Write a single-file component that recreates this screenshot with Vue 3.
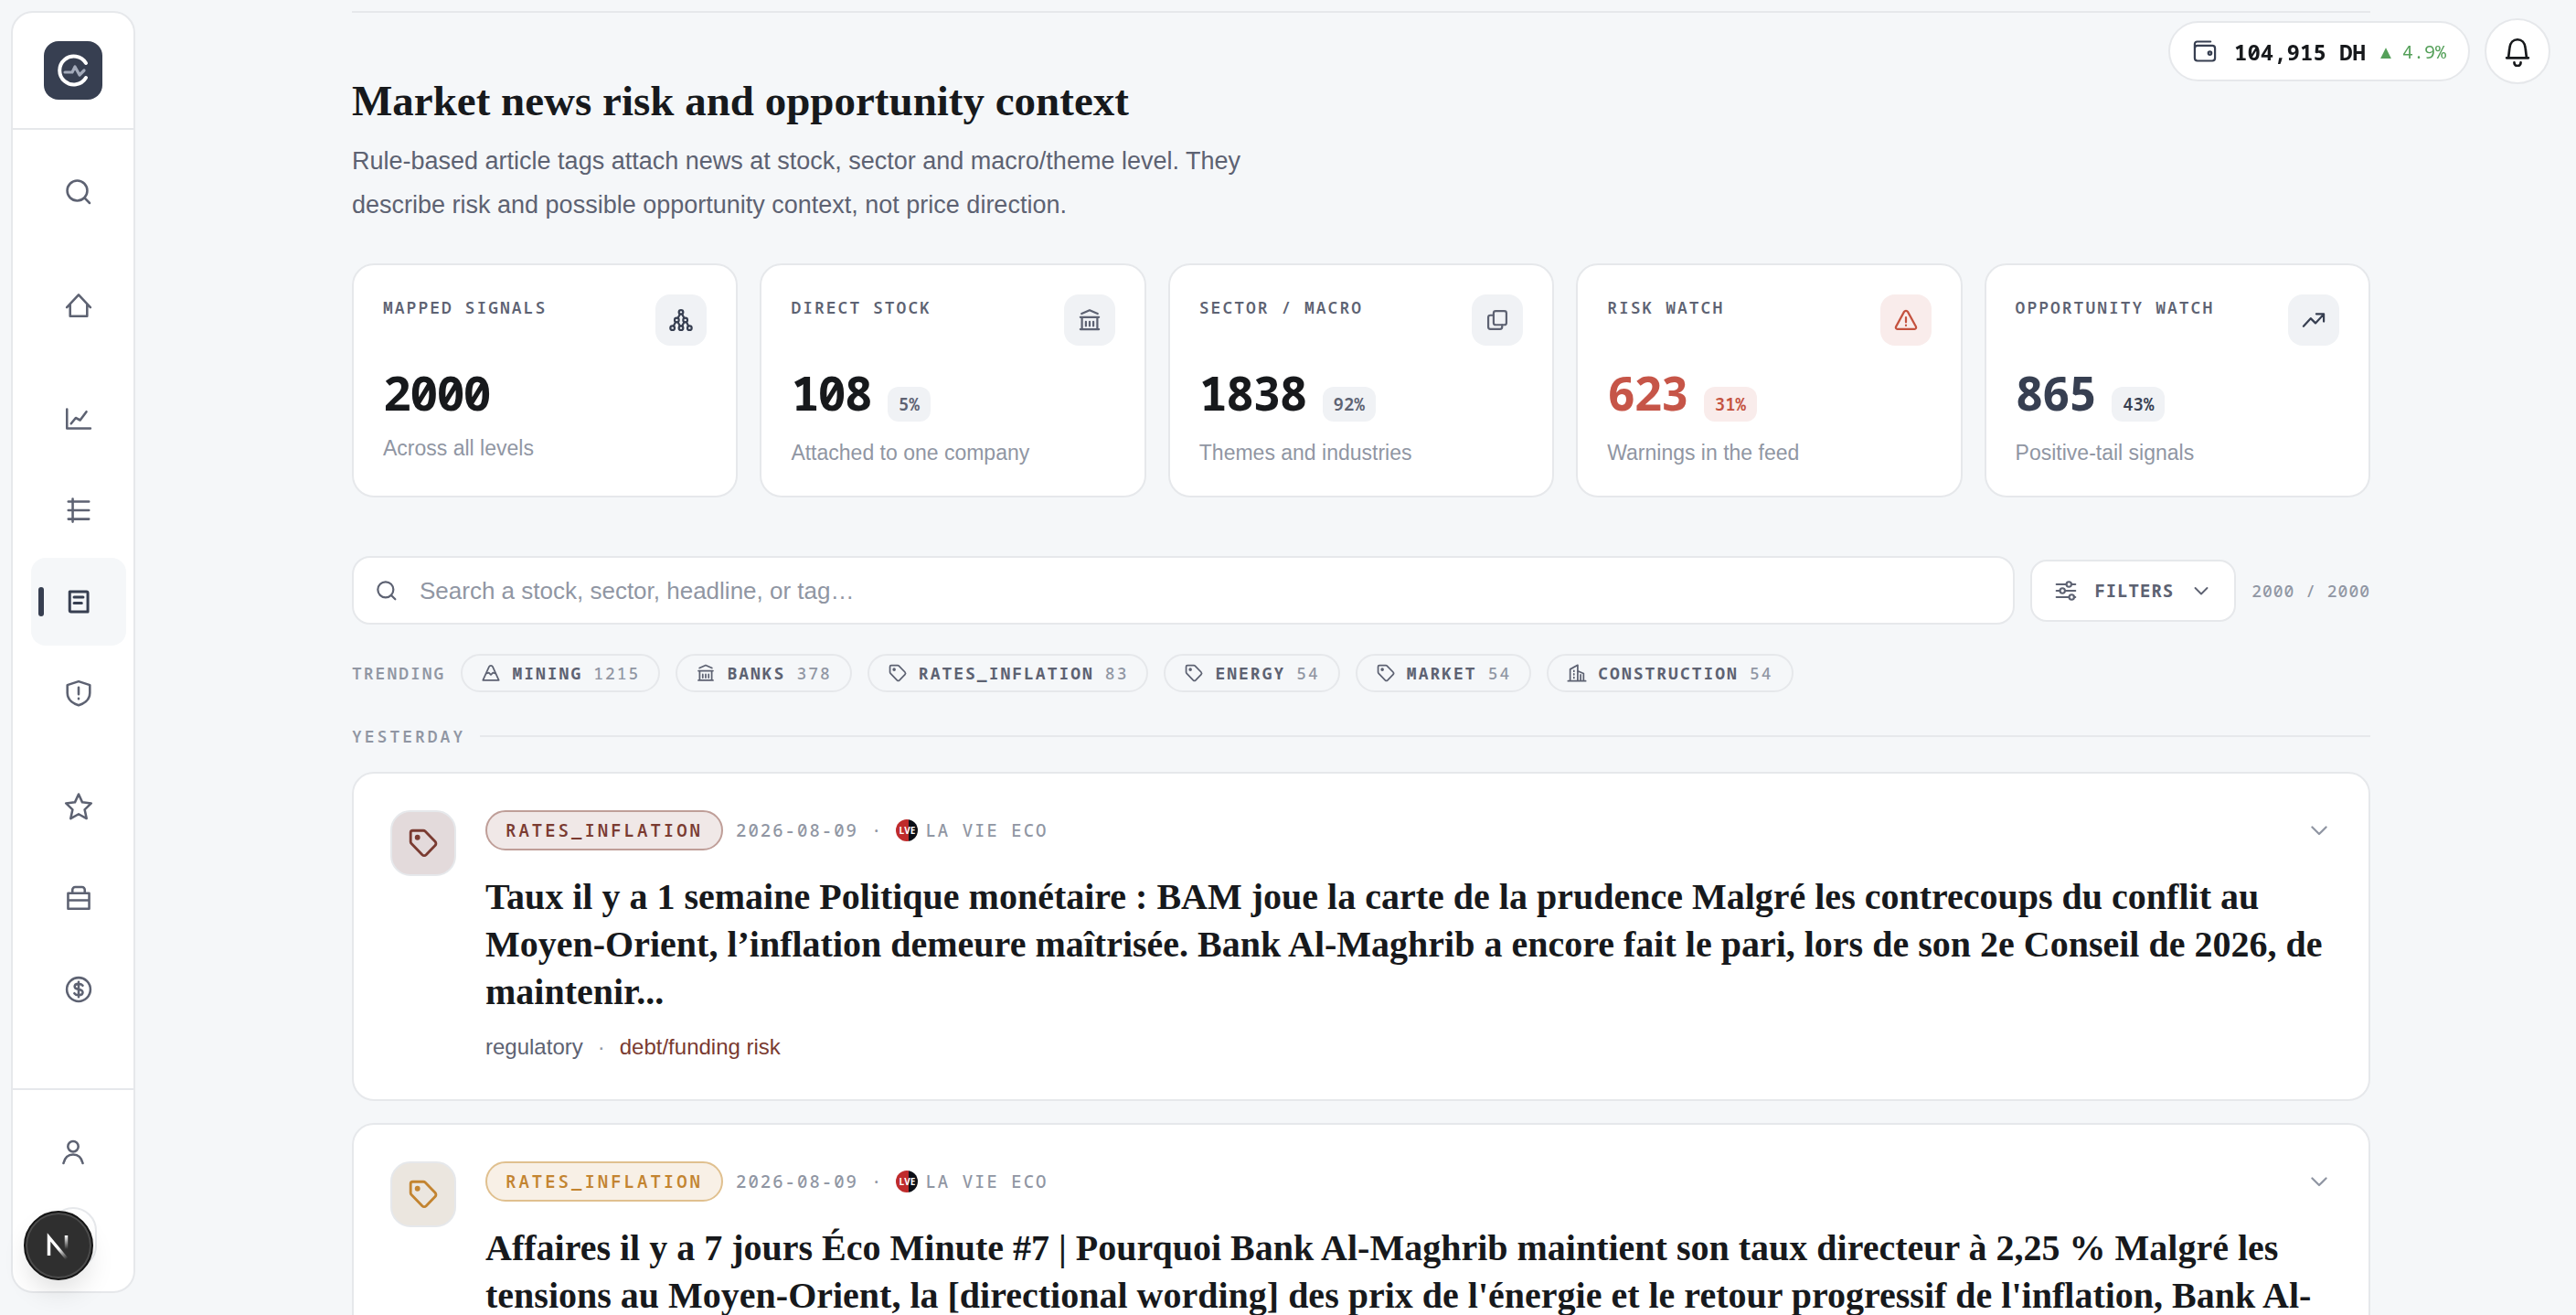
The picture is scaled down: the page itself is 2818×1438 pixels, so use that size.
<template>
  <div class="shell">
    <aside class="sidebar">
      <div class="brand">
        <a class="brand-mark" href="#" aria-label="Home page">
          <svg viewBox="0 0 64 64" fill="none" stroke-linecap="round" stroke-linejoin="round">
            <path d="M46 24 A15.5 15.5 0 1 0 46 40" stroke="#fff" stroke-width="4" />
            <path d="M23 34h8l3-6 5 9 5-5" stroke="#a3aaba" stroke-width="3.2" />
          </svg>
        </a>
      </div>
      <nav class="nav">
        <div v-for="(group, i) in navGroups" :key="i" class="nav-group">
          <a
            v-for="item in group"
            :key="item.name"
            href="#"
            class="nav-item"
            :class="{ active: item.name === 'News' }"
            :aria-label="item.name"
          >
            <svg class="icon" viewBox="0 0 24 24" v-html="icons[item.icon]"></svg>
          </a>
        </div>
      </nav>
      <div class="account">
        <a href="#" class="account-link" aria-label="Account">
          <svg class="icon" viewBox="0 0 24 24" v-html="icons.user"></svg>
        </a>
        <button class="collapse" aria-label="Collapse"></button>
      </div>
    </aside>

    <main class="main">
      <div class="content">
        <header class="intro">
          <h1>Market news risk and opportunity context</h1>
          <p>
            Rule-based article tags attach news at stock, sector and macro/theme level. They describe
            risk and possible opportunity context, not price direction.
          </p>
        </header>

        <section class="stats">
          <article v-for="stat in stats" :key="stat.label" class="stat" :class="stat.tone">
            <div class="stat-head">
              <span class="stat-label">{{ stat.label }}</span>
              <span class="stat-icon">
                <svg class="icon" viewBox="0 0 24 24" v-html="icons[stat.icon]"></svg>
              </span>
            </div>
            <div class="stat-row">
              <strong>{{ stat.value }}</strong>
              <span v-if="stat.share" class="share">{{ stat.share }}</span>
            </div>
            <p>{{ stat.note }}</p>
          </article>
        </section>

        <div class="toolbar">
          <label class="search">
            <svg class="icon" viewBox="0 0 24 24" v-html="icons.search"></svg>
            <input
              v-model="query"
              type="text"
              aria-label="Search news"
              placeholder="Search a stock, sector, headline, or tag…"
            />
          </label>
          <button class="filters">
            <svg class="icon" viewBox="0 0 24 24" v-html="icons.sliders"></svg>
            <span>FILTERS</span>
            <svg class="icon chevron" viewBox="0 0 24 24" v-html="icons.chevron"></svg>
          </button>
          <span class="count">2000 / 2000</span>
        </div>

        <div class="trending">
          <span class="trending-label">TRENDING</span>
          <button v-for="topic in topics" :key="topic.name" class="chip">
            <svg class="icon" viewBox="0 0 24 24" v-html="icons[topic.icon]"></svg>
            <span>{{ topic.name }}</span>
            <span class="chip-count">{{ topic.count }}</span>
          </button>
        </div>

        <h2 class="day">YESTERDAY</h2>

        <section class="feed">
          <article v-for="item in articles" :key="item.title" class="story" :class="item.tone">
            <span class="story-icon">
              <svg class="icon" viewBox="0 0 24 24" v-html="icons.tag"></svg>
            </span>
            <div class="story-body">
              <div class="meta">
                <span class="pill">RATES_INFLATION</span>
                <span>{{ item.date }}</span>
                <span>·</span>
                <span class="source"><span class="source-logo">LVE</span>LA VIE ECO</span>
                <button class="expand" aria-label="Expand">
                  <svg class="icon" viewBox="0 0 24 24" v-html="icons.chevron"></svg>
                </button>
              </div>
              <h3>{{ item.title }}</h3>
              <div class="tags">
                <span>regulatory</span>
                <span class="dot">·</span>
                <span class="risk">debt/funding risk</span>
              </div>
            </div>
          </article>
        </section>
      </div>
    </main>

    <div class="topbar">
      <button class="wallet">
        <svg class="icon" viewBox="0 0 24 24" v-html="icons.wallet"></svg>
        <span class="balance">
          <strong>104,915 DH</strong>
          <span class="change">▲ 4.9%</span>
        </span>
      </button>
      <button class="bell" aria-label="Notifications">
        <svg class="icon" viewBox="0 0 24 24" v-html="icons.bell"></svg>
      </button>
    </div>

    <button class="dev-badge" aria-label="Open dev tools">
      <svg viewBox="0 0 40 40" fill="none">
        <defs>
          <linearGradient id="diag" x1="22" y1="22" x2="31" y2="33" gradientUnits="userSpaceOnUse">
            <stop stop-color="#fff" />
            <stop offset="1" stop-color="#fff" stop-opacity="0" />
          </linearGradient>
          <linearGradient id="stem" x1="0" y1="9" x2="0" y2="24" gradientUnits="userSpaceOnUse">
            <stop stop-color="#fff" />
            <stop offset="1" stop-color="#fff" stop-opacity="0" />
          </linearGradient>
        </defs>
        <path d="M9.5 31V11L29.5 35" stroke="url(#diag)" stroke-width="3.5" />
        <path d="M28.5 9v16" stroke="url(#stem)" stroke-width="3.5" />
      </svg>
    </button>
  </div>
</template>

<script setup>
import { ref } from 'vue';

const query = ref('');

// 24x24 stroke icons
const icons = {
  search: '<circle cx="11" cy="11" r="7.3"/><path d="M16.3 16.3L20 20"/>',
  home: '<path d="M3.4 13.4L12 4.3l8.600 9.100M5.800 11.500V19.800h12.400v-8.300"/>',
  chart: '<path d="M3.500 5v14H20.600M6.500 15.500l3.400-4.200 3.200 1.700 4.600-6.200"/>',
  list: '<path d="M4.500 5.600h15M4.500 12h15M4.500 18.400h15M7.700 3.600v16.800"/>',
  news: '<path d="M5.500 18.500V4.700h12.200a1 1 0 0 1 1 1v13.600H6.500a1 1 0 0 1-1-1zM8.700 8.600h6.600M8.700 13h5.500"/>',
  shield: '<path d="M12 3.400l8.200 2.700v5.700c0 4.600-3.700 7.600-8.200 9-4.500-1.400-8.200-4.400-8.200-9V6.100zM12 7.800v5M12 15.900v.2"/>',
  star: '<path d="M12 3l2.700 5.900 6.500.7-4.800 4.600 1.400 6.500L12 17.500l-5.800 3.200 1.400-6.500-4.800-4.600 6.500-.7z"/>',
  briefcase: '<path d="M4.300 8.500h15.400v11.300H4.300zM4.300 13.700h15.400M7.500 8.200V6a2 2 0 0 1 2-2h5a2 2 0 0 1 2 2v2.200"/>',
  dollar: '<circle cx="12" cy="12" r="8.600"/><path d="M15 9.200c-.6-.9-1.700-1.300-3-1.300-1.700 0-2.900.7-2.900 2s1 1.800 2.900 2.100c1.900.3 3 .9 3 2.200s-1.200 2-3 2c-1.400 0-2.500-.5-3.100-1.400M12 6.500v11"/>',
  user: '<circle cx="12" cy="7.800" r="3.800"/><path d="M5 20c.9-4.200 3.600-6.400 7-6.400s6.100 2.200 7 6.400"/>',
  network: '<circle cx="12" cy="4.600" r="2"/><circle cx="8" cy="12" r="2"/><circle cx="16" cy="12" r="2"/><circle cx="4" cy="19.400" r="2"/><circle cx="12" cy="19.400" r="2"/><circle cx="20" cy="19.400" r="2"/><path d="M11 6.400l-2 3.800M13 6.400l2 3.800M7 13.800l-2 3.800M17 13.800l2 3.800M9 13.800l2 3.800M15 13.800l-2 3.800"/>',
  bank: '<path d="M4.500 6L12 2.700 19.500 6M3.300 9.300h17.400M4.800 9.300v11.300M19.200 9.300v11.300M3.300 20.600h17.400M8.500 13.500v4M12 13.500v4M15.500 13.500v4"/>',
  copy: '<rect x="8.500" y="3.500" width="12" height="13" rx="2"/><path d="M8.500 7.500H5.500a2 2 0 0 0-2 2v9a2 2 0 0 0 2 2h9a2 2 0 0 0 2-2v-2"/>',
  warning: '<path d="M10.300 4.200L2.600 18.300a1.500 1.500 0 0 0 1.300 2.200h16.200a1.500 1.500 0 0 0 1.300-2.200L13.700 4.200a2 2 0 0 0-3.400 0zM12 9.500v4.500M12 16.900v.2"/>',
  trend: '<path d="M2.500 17.800l6.700-7.400 4.500 4.500 7.700-8.300M14.500 6.300h7v7"/>',
  sliders: '<path d="M2.500 5.500h10M18 5.500h3.500M2.500 12h3.500M11.500 12h10M2.500 18.500h12.500M20 18.500h1.500"/><circle cx="15" cy="5.500" r="2.500"/><circle cx="8.500" cy="12" r="2.500"/><circle cx="17.800" cy="18.500" r="2.500"/>',
  chevron: '<path d="M5.500 9l6.500 6.500L18.500 9"/>',
  tag: '<path d="M2.800 11V4.300a1.500 1.500 0 0 1 1.500-1.500H12a2 2 0 0 1 1.400.6l7.300 7.500a2 2 0 0 1 0 2.800l-6.600 6.800a2 2 0 0 1-2.800 0l-7.900-8.100a2 2 0 0 1-.6-1.400z"/><circle cx="7.800" cy="7.800" r="1" fill="currentColor"/>',
  mining: '<path d="M2.500 20.500L9.800 4.600a2.400 2.400 0 0 1 4.400 0l7.300 15.900zM7 12.500l2.500-1 2.500 2.500 2.500-2.500 2.500 1"/>',
  building: '<path d="M1.500 21.500h21M4 21.500V7.500l9-5v19M13 9.500l7 3v9M8.500 9v1M8.500 13v1M8.500 17v1M16.500 14v7"/>',
  wallet: '<rect x="2.500" y="6.800" width="19" height="14.200" rx="2.500"/><path d="M2.500 8.500V5.200a2.200 2.200 0 0 1 2.200-2.200h12.600"/><circle cx="16.700" cy="13.800" r="1.500"/>',
  bell: '<path d="M3.600 17.200h16.800M5 17l.9-7.500C6.300 5.400 8.800 3 12 3s5.700 2.400 6.100 6.500L19 17M9.500 20.800a2.500 2.500 0 0 0 5 0"/>',
};

const navGroups = [
  [{ name: 'Search', icon: 'search' }],
  [{ name: 'Home', icon: 'home' }],
  [
    { name: 'Markets', icon: 'chart' },
    { name: 'Screener', icon: 'list' },
    { name: 'News', icon: 'news' },
    { name: 'Risk', icon: 'shield' },
  ],
  [
    { name: 'Watchlist', icon: 'star' },
    { name: 'Portfolio', icon: 'briefcase' },
    { name: 'Dividends', icon: 'dollar' },
  ],
];

const stats = [
  { label: 'MAPPED SIGNALS', value: 2000, note: 'Across all levels', icon: 'network', tone: 'total' },
  { label: 'DIRECT STOCK', value: 108, share: '5%', note: 'Attached to one company', icon: 'bank' },
  { label: 'SECTOR / MACRO', value: 1838, share: '92%', note: 'Themes and industries', icon: 'copy' },
  { label: 'RISK WATCH', value: 623, share: '31%', note: 'Warnings in the feed', icon: 'warning', tone: 'risk' },
  { label: 'OPPORTUNITY WATCH', value: 865, share: '43%', note: 'Positive-tail signals', icon: 'trend', tone: 'upside' },
];

const topics = [
  { name: 'MINING', count: 1215, icon: 'mining' },
  { name: 'BANKS', count: 378, icon: 'bank' },
  { name: 'RATES_INFLATION', count: 83, icon: 'tag' },
  { name: 'ENERGY', count: 54, icon: 'tag' },
  { name: 'MARKET', count: 54, icon: 'tag' },
  { name: 'CONSTRUCTION', count: 54, icon: 'building' },
];

const articles = [
  {
    tone: 'high',
    date: '2026-08-09',
    title:
      'Taux il y a 1 semaine Politique monétaire : BAM joue la carte de la prudence Malgré les contrecoups du conflit au Moyen-Orient, l’inflation demeure maîtrisée. Bank Al-Maghrib a encore fait le pari, lors de son 2e Conseil de 2026, de maintenir...',
  },
  {
    tone: 'medium',
    date: '2026-08-09',
    title:
      "Affaires il y a 7 jours Éco Minute #7 | Pourquoi Bank Al-Maghrib maintient son taux directeur à 2,25 % Malgré les tensions au Moyen-Orient, la [directional wording] des prix de l'énergie et le retour progressif de l'inflation, Bank Al-Maghrib...",
  },
];
</script>

<style>
body {
  background: #f5f7f9;
}
</style>

<style scoped>
.shell {
  --mono: "Noto Sans Mono", "DejaVu Sans Mono", monospace;
  --ink: #17191c;
  --muted: #5d6272;
  --faint: #9096a3;
  --navy: #373f51;
  --line: #e6e8eb;
  display: flex;
  height: 100vh;
  overflow: hidden;
  background: #f5f7f9;
  color: var(--ink);
  font-family: "Liberation Sans", Arial, sans-serif;
}

.shell * {
  box-sizing: border-box;
}

button {
  font: inherit;
  color: inherit;
  cursor: pointer;
}

.icon {
  display: block;
  flex-shrink: 0;
  width: 28px;
  height: 28px;
  fill: none;
  stroke: currentColor;
  stroke-width: 1.9;
  stroke-linecap: round;
  stroke-linejoin: round;
}

/* sidebar */
.sidebar {
  display: flex;
  flex-direction: column;
  flex-shrink: 0;
  width: 136px;
  margin: 12px 12px 24px;
  border: 2px solid var(--line);
  border-radius: 24px;
  background: #fff;
}

.brand {
  display: flex;
  justify-content: center;
  padding: 31px 0;
  border-bottom: 2px solid var(--line);
}

.brand-mark {
  width: 64px;
  height: 64px;
  border-radius: 16px;
  background: var(--navy);
}

.brand-mark svg {
  display: block;
}

.nav {
  display: flex;
  flex: 1;
  flex-direction: column;
  gap: 28px;
  padding: 20px 8px 0 20px;
}

.nav-group {
  display: flex;
  flex-direction: column;
  gap: 4px;
}

.nav-item {
  position: relative;
  display: flex;
  align-items: center;
  justify-content: center;
  height: 96px;
  border-radius: 16px;
  color: var(--muted);
}

.nav-item .icon,
.account-link .icon {
  width: 36px;
  height: 36px;
  stroke-width: 1.7;
}

.nav-item.active {
  background: #f5f7f9;
  color: var(--navy);
}

.nav-item.active .icon {
  stroke-width: 2;
}

.nav-item.active::before {
  content: '';
  position: absolute;
  left: 8px;
  width: 6px;
  height: 32px;
  border-radius: 3px;
  background: var(--navy);
}

.account {
  display: flex;
  flex-direction: column;
  align-items: center;
  height: 222px;
  padding-top: 50px;
  border-top: 2px solid var(--line);
}

.account-link {
  color: var(--muted);
}

.collapse {
  width: 52px;
  height: 68px;
  margin-top: 42px;
  border: 2px solid var(--line);
  border-radius: 26px;
  background: #fff;
}

/* main column */
.main {
  flex: 1;
  min-width: 0;
  overflow: hidden;
}

.content {
  max-width: 2208px;
  margin: 12px auto 0;
  border-top: 2px solid var(--line);
}

.intro {
  padding-top: 66px;
}

h1 {
  margin: 0;
  font: 700 47px/60px "Liberation Serif", "Times New Roman", serif;
}

.intro p {
  max-width: 1020px;
  margin: 12px 0 0;
  color: var(--muted);
  font-size: 27px;
  line-height: 48px;
}

.stats {
  display: grid;
  grid-template-columns: repeat(5, 1fr);
  gap: 24px;
  margin-top: 40px;
}

.stat {
  height: 256px;
  padding: 32px;
  border: 2px solid var(--line);
  border-radius: 24px;
  background: #fff;
}

.stat-head {
  display: flex;
  justify-content: space-between;
  margin-bottom: 24px;
}

.stat-label {
  color: var(--muted);
  font: 600 18px/28px var(--mono);
  letter-spacing: 2px;
}

.stat-icon {
  display: flex;
  align-items: center;
  justify-content: center;
  width: 56px;
  height: 56px;
  border-radius: 16px;
  background: #f0f2f5;
  color: var(--muted);
}

.stat-row {
  display: flex;
  align-items: baseline;
  gap: 18px;
}

.stat-row strong {
  font: 700 52px/54px var(--mono);
  letter-spacing: -2px;
}

.share {
  padding: 6px 12px;
  border-radius: 12px;
  background: #f0f2f5;
  color: var(--muted);
  font: 600 19px/26px var(--mono);
}

.stat p {
  margin: 20px 0 0;
  color: var(--faint);
  font-size: 23px;
  line-height: 28px;
}

.total .stat-icon,
.upside .stat-icon,
.upside .stat-row strong,
.upside .share {
  color: var(--navy);
}

.stat.risk .stat-icon,
.stat.risk .share {
  background: #f9eceb;
  color: #c4523f;
}

.stat.risk strong {
  color: #c65548;
}

.toolbar {
  display: flex;
  align-items: center;
  gap: 17px;
  margin-top: 64px;
}

.search {
  display: flex;
  flex: 1;
  align-items: center;
  gap: 22px;
  height: 75px;
  padding: 0 22px;
  border: 2px solid var(--line);
  border-radius: 20px;
  background: #fff;
  color: var(--muted);
}

.search input {
  flex: 1;
  min-width: 0;
  padding: 0;
  border: 0;
  outline: 0;
  background: none;
  color: var(--ink);
  font: 26px/36px "Liberation Sans", Arial, sans-serif;
}

.search input::placeholder {
  color: var(--faint);
  opacity: 1;
}

.filters {
  display: flex;
  align-items: center;
  gap: 18px;
  height: 68px;
  padding: 0 24px;
  border: 2px solid var(--line);
  border-radius: 18px;
  background: #fff;
  color: var(--muted);
  font: 700 19px/28px var(--mono);
  letter-spacing: 1px;
}

.filters .icon {
  width: 26px;
  height: 26px;
}

.filters .chevron {
  width: 24px;
  height: 24px;
}

.count {
  color: var(--faint);
  font: 500 18px/28px var(--mono);
  letter-spacing: 1px;
}

.trending {
  display: flex;
  flex-wrap: wrap;
  align-items: center;
  gap: 17px;
  margin-top: 32px;
}

.trending-label,
.day {
  color: var(--faint);
  font: 600 18px/28px var(--mono);
  letter-spacing: 2px;
}

.chip {
  display: flex;
  align-items: center;
  gap: 12px;
  height: 42px;
  padding: 0 20px;
  border: 2px solid var(--line);
  border-radius: 21px;
  background: none;
  color: var(--muted);
  font: 700 18px/28px var(--mono);
  letter-spacing: 2px;
}

.chip .icon {
  width: 22px;
  height: 22px;
}

.chip-count {
  color: var(--faint);
  font-weight: 500;
}

.day {
  display: flex;
  align-items: center;
  gap: 16px;
  margin: 34px 0 25px;
  letter-spacing: 3px;
}

.day::after {
  content: '';
  flex: 1;
  height: 2px;
  background: var(--line);
}

/* feed */
.feed {
  display: flex;
  flex-direction: column;
  gap: 24px;
}

.story {
  --tone: #7a3b31;
  --tone-line: #bf9e98;
  --tone-soft: #f0e8e7;
  --tone-box: #e3dadb;
  display: flex;
  gap: 32px;
  padding: 40px;
  border: 2px solid var(--line);
  border-radius: 24px;
  background: #fff;
}

.story.medium {
  --tone: #c38430;
  --tone-line: #e0c08f;
  --tone-soft: #f8f0e6;
  --tone-box: #ebe6df;
}

.story-icon {
  display: flex;
  flex-shrink: 0;
  align-items: center;
  justify-content: center;
  width: 72px;
  height: 72px;
  border: 2px solid var(--line);
  border-radius: 22px;
  background: var(--tone-box);
  color: var(--tone);
}

.story-icon .icon {
  width: 36px;
  height: 36px;
}

.story-body {
  flex: 1;
  min-width: 0;
}

.meta {
  display: flex;
  align-items: center;
  gap: 14px;
  color: var(--faint);
  font: 500 19px/28px var(--mono);
  letter-spacing: 2px;
}

.pill {
  padding: 6px 20px;
  border: 2px solid var(--tone-line);
  border-radius: 22px;
  background: var(--tone-soft);
  color: var(--tone);
  font-weight: 600;
  letter-spacing: 3px;
}

.source {
  display: flex;
  align-items: center;
  gap: 8px;
}

.source-logo {
  display: flex;
  align-items: center;
  justify-content: center;
  width: 24px;
  height: 24px;
  border-radius: 50%;
  background: linear-gradient(90deg, #bf2b2b 60%, #0c0f17 60%);
  color: #fff;
  font: 700 10px/24px "Open Sans", sans-serif;
  letter-spacing: 0;
}

.expand {
  margin-left: auto;
  padding: 0;
  border: 0;
  background: none;
}

h3 {
  margin: 25px 0 0;
  font: 700 40px/52px "Liberation Serif", "Times New Roman", serif;
}

.tags {
  display: flex;
  gap: 16px;
  margin-top: 17px;
  color: var(--muted);
  font-size: 24px;
  line-height: 34px;
}

.tags .dot {
  color: var(--faint);
}

.tags .risk {
  color: #7a3b31;
}

/* floating controls */
.topbar {
  position: fixed;
  top: 20px;
  right: 28px;
  display: flex;
  align-items: center;
  gap: 16px;
}

.wallet {
  display: flex;
  align-items: center;
  gap: 18px;
  height: 66px;
  padding: 0 24px;
  border: 2px solid var(--line);
  border-radius: 33px;
  background: #fff;
  font-family: var(--mono);
}

.wallet .icon {
  color: var(--navy);
}

.balance {
  display: flex;
  align-items: center;
  gap: 16px;
}

.balance strong {
  font-size: 24px;
}

.change {
  color: #55a05a;
  font-size: 20px;
}

.bell {
  display: flex;
  align-items: center;
  justify-content: center;
  width: 72px;
  height: 72px;
  padding: 0;
  border: 2px solid var(--line);
  border-radius: 50%;
  background: #fff;
}

.bell .icon {
  width: 34px;
  height: 34px;
}

.dev-badge {
  position: fixed;
  bottom: 38px;
  left: 26px;
  display: flex;
  align-items: center;
  justify-content: center;
  width: 76px;
  height: 76px;
  padding: 0;
  border: 2px solid #151515;
  border-radius: 50%;
  background: #2f2f2f;
  box-shadow: inset 0 0 0 2px #4c4c4c, 0 16px 32px -8px rgba(0, 0, 0, 0.16);
}

.dev-badge svg {
  width: 40px;
  height: 40px;
}
</style>
